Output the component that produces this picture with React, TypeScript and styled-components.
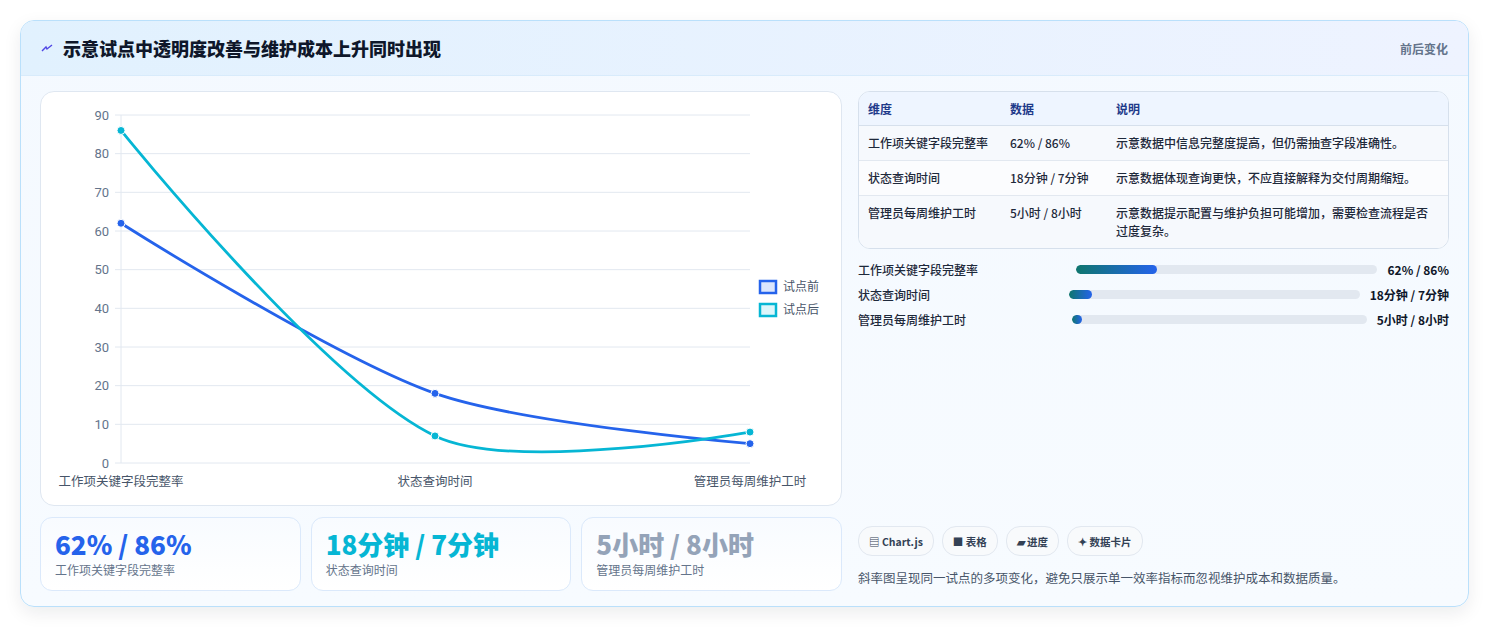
import styled, { createGlobalStyle } from "styled-components";

const Global = createGlobalStyle`
  body { margin: 0; background: #f3f4f6; font-family: "Noto Sans CJK SC", "Noto Sans", sans-serif; color: #1e293b; }
`;

const Page = styled.div`
  padding: 20px 20px 20px 20px;
  background: #ffffff;
  height: 629px;
  box-sizing: border-box;
`;

const Card = styled.div`
  border: 1px solid #bae0fb;
  border-radius: 14px;
  overflow: hidden;
  background: linear-gradient(180deg, #f4f9ff, #f7fbff);
  box-shadow: 0 6px 18px rgba(15, 23, 42, 0.08);
`;

const Header = styled.div`
  height: 54px;
  display: flex;
  align-items: center;
  justify-content: space-between;
  padding: 0 20px;
  background: linear-gradient(90deg, #e1f1fe, #eef3ff);
  border-bottom: 1px solid #d8ebfb;
`;

const Title = styled.h1`
  margin: 0;
  font-size: 18px;
  font-weight: 800;
  color: #0f172a;
  display: flex;
  align-items: center;
  gap: 10px;
`;

const Tag = styled.span`
  font-size: 12px;
  font-weight: 700;
  color: #64748b;
`;

const Body = styled.div`
  display: grid;
  grid-template-columns: 802px 1fr;
  gap: 16px;
  padding: 15px 19px 15px 19px;
`;

const Left = styled.div`
  display: flex;
  flex-direction: column;
  gap: 11px;
`;

const ChartBox = styled.div`
  height: 413px;
  background: #ffffff;
  border: 1px solid #dfe7f1;
  border-radius: 14px;
`;

const Kpis = styled.div`
  display: grid;
  grid-template-columns: repeat(3, 1fr);
  gap: 10px;
`;

const Kpi = styled.div`
  height: 74px;
  box-sizing: border-box;
  border: 1px solid #dbe9fb;
  border-radius: 12px;
  background: linear-gradient(180deg, #f8fbff, #ffffff);
  padding: 10px 14px;
`;

const KpiValue = styled.div<{ $c: string }>`
  font-size: 26px;
  font-weight: 800;
  line-height: 32px;
  color: ${(p) => p.$c};
`;

const KpiLabel = styled.div`
  font-size: 12px;
  color: #64748b;
  margin-top: 1px;
`;

const Right = styled.div`
  display: flex;
  flex-direction: column;
`;

const Table = styled.table`
  width: 100%;
  border-collapse: separate;
  border-spacing: 0;
  border: 1px solid #d6e0ec;
  border-radius: 12px;
  overflow: hidden;
  font-size: 12px;
  background: #fff;
`;

const Th = styled.th`
  text-align: left;
  font-weight: 700;
  color: #1e3a8a;
  background: #eef5ff;
  padding: 0 9px;
  height: 33px;
  border-bottom: 1px solid #d6e0ec;
`;

const Td = styled.td<{ $alt?: boolean }>`
  padding: 8px 9px;
  vertical-align: top;
  line-height: 18px;
  font-weight: 500;
  color: #1e293b;
  background: ${(p) => (p.$alt ? "#fbfcfe" : "#f6f9fd")};
  border-bottom: 1px solid #e2e8f0;
  tr:last-child & { border-bottom: none; }
`;

const Bars = styled.div`
  display: flex;
  flex-direction: column;
  gap: 7px;
  margin-top: 11px;
`;

const BarRow = styled.div`
  display: flex;
  align-items: center;
  gap: 10px;
  height: 18px;
  font-size: 12px;
`;

const BarLabel = styled.span`
  flex: 1 1 0;
  white-space: nowrap;
  font-weight: 500;
  color: #1e293b;
`;

const Track = styled.div`
  flex: 1.45 1 0;
  height: 9px;
  border-radius: 5px;
  background: #e2e8f0;
  overflow: hidden;
`;

const Fill = styled.div`
  height: 100%;
  border-radius: 5px;
  background: linear-gradient(90deg, #0f766e, #2563eb);
`;

const BarValue = styled.span`
  font-weight: 700;
  color: #0f172a;
  white-space: nowrap;
`;

const Spacer = styled.div`
  flex: 1;
`;

const Chips = styled.div`
  display: flex;
  gap: 8px;
`;

const Chip = styled.span`
  height: 28px;
  padding: 0 10px;
  border: 1px solid #e2e8f0;
  border-radius: 14px;
  background: #f8fafc;
  display: inline-flex;
  align-items: center;
  gap: 3px;
  font-size: 10.5px;
  font-weight: 700;
  color: #334155;
`;

const Note = styled.p`
  margin: 12px 0 4px;
  font-size: 12.5px;
  color: #475569;
`;

type P = [number, number];
const X = [120, 434, 749];
const yOf = (v: number) => 463 - (v * 348) / 90;

function curve(vals: number[]) {
  const pts: P[] = vals.map((v, i) => [X[i], yOf(v)]);
  const t = 0.3;
  const cps: { prev: P; next: P }[] = pts.map((p, i) => {
    if (i === 0 || i === pts.length - 1) return { prev: p, next: p };
    const a = pts[i - 1], b = pts[i + 1];
    const d01 = Math.hypot(p[0] - a[0], p[1] - a[1]);
    const d12 = Math.hypot(b[0] - p[0], b[1] - p[1]);
    const fa = (t * d01) / (d01 + d12), fb = (t * d12) / (d01 + d12);
    return {
      prev: [p[0] - fa * (b[0] - a[0]), p[1] - fa * (b[1] - a[1])],
      next: [p[0] + fb * (b[0] - a[0]), p[1] + fb * (b[1] - a[1])],
    };
  });
  let d = `M${pts[0][0]},${pts[0][1]}`;
  for (let i = 1; i < pts.length; i++) {
    const c1 = cps[i - 1].next, c2 = cps[i].prev;
    d += ` C${c1[0]},${c1[1]} ${c2[0]},${c2[1]} ${pts[i][0]},${pts[i][1]}`;
  }
  return { d, pts };
}

const series = [
  { name: "试点前", color: "#2563eb", fill: "#dbe6fd", vals: [62, 18, 5] },
  { name: "试点后", color: "#06b6d4", fill: "#dcf6fb", vals: [86, 7, 8] },
];
const cats = ["工作项关键字段完整率", "状态查询时间", "管理员每周维护工时"];

function Chart() {
  return (
    <svg width="802" height="413" viewBox="40 92 802 413" fontFamily="'Noto Sans CJK SC', sans-serif">
      {Array.from({ length: 10 }, (_, i) => i * 10).map((v) => (
        <g key={v}>
          <line x1={114} x2={749} y1={yOf(v)} y2={yOf(v)} stroke="#e2e8f0" />
          <text x={108} y={yOf(v) + 4.5} fontSize="13" fill="#64748b" textAnchor="end" fontFamily="Roboto, sans-serif">{v}</text>
        </g>
      ))}
      <line x1={120} x2={120} y1={115} y2={463} stroke="#e2e8f0" />
      {cats.map((c, i) => (
        <text key={c} x={X[i]} y={486} fontSize="12.5" fill="#475569" textAnchor="middle">{c}</text>
      ))}
      {series.map((s) => {
        const { d, pts } = curve(s.vals);
        return (
          <g key={s.name}>
            <path d={d} fill="none" stroke={s.color} strokeWidth="2.8" />
            {pts.map((p, i) => (
              <circle key={i} cx={p[0]} cy={p[1]} r="4" fill={s.color} stroke="#fff" strokeWidth="1" />
            ))}
          </g>
        );
      })}
      {series.map((s, i) => (
        <g key={s.name}>
          <rect x={759} y={281 + i * 23} width={16} height={12} fill={s.fill} stroke={s.color} strokeWidth="2.5" />
          <text x={782} y={291 + i * 23} fontSize="12" fill="#475569">{s.name}</text>
        </g>
      ))}
    </svg>
  );
}

const rows = [
  ["工作项关键字段完整率", "62% / 86%", "示意数据中信息完整度提高，但仍需抽查字段准确性。"],
  ["状态查询时间", "18分钟 / 7分钟", "示意数据体现查询更快，不应直接解释为交付周期缩短。"],
  ["管理员每周维护工时", "5小时 / 8小时", "示意数据提示配置与维护负担可能增加，需要检查流程是否过度复杂。"],
];
const bars = [
  { v: "62% / 86%", w: 27 },
  { v: "18分钟 / 7分钟", w: 8 },
  { v: "5小时 / 8小时", w: 3.5 },
];

export default function App() {
  return (
    <>
      <Global />
      <Page>
        <Card>
          <Header>
            <Title>
              <svg width="12" height="10" viewBox="0 0 12 10">
                <path d="M1 8 L5 4 L6 6 L11 2" fill="none" stroke="#4f46e5" strokeWidth="1.4" />
              </svg>
              示意试点中透明度改善与维护成本上升同时出现
            </Title>
            <Tag>前后变化</Tag>
          </Header>
          <Body>
            <Left>
              <ChartBox>
                <Chart />
              </ChartBox>
              <Kpis>
                <Kpi>
                  <KpiValue $c="#2563eb">62% / 86%</KpiValue>
                  <KpiLabel>工作项关键字段完整率</KpiLabel>
                </Kpi>
                <Kpi>
                  <KpiValue $c="#06b6d4">18分钟 / 7分钟</KpiValue>
                  <KpiLabel>状态查询时间</KpiLabel>
                </Kpi>
                <Kpi>
                  <KpiValue $c="#94a3b8">5小时 / 8小时</KpiValue>
                  <KpiLabel>管理员每周维护工时</KpiLabel>
                </Kpi>
              </Kpis>
            </Left>
            <Right>
              <Table>
                <thead>
                  <tr>
                    <Th style={{ width: 124 }}>维度</Th>
                    <Th style={{ width: 88 }}>数据</Th>
                    <Th>说明</Th>
                  </tr>
                </thead>
                <tbody>
                  {rows.map((r, i) => (
                    <tr key={r[0]}>
                      {r.map((c, j) => (
                        <Td key={j} $alt={i % 2 === 1}>{c}</Td>
                      ))}
                    </tr>
                  ))}
                </tbody>
              </Table>
              <Bars>
                {bars.map((b, i) => (
                  <BarRow key={i}>
                    <BarLabel>{rows[i][0]}</BarLabel>
                    <Track>
                      <Fill style={{ width: `${b.w}%` }} />
                    </Track>
                    <BarValue>{b.v}</BarValue>
                  </BarRow>
                ))}
              </Bars>
              <Spacer />
              <Chips>
                <Chip>▤ Chart.js</Chip>
                <Chip>■ 表格</Chip>
                <Chip>▰ 进度</Chip>
                <Chip>✦ 数据卡片</Chip>
              </Chips>
              <Note>斜率图呈现同一试点的多项变化，避免只展示单一效率指标而忽视维护成本和数据质量。</Note>
            </Right>
          </Body>
        </Card>
      </Page>
    </>
  );
}
